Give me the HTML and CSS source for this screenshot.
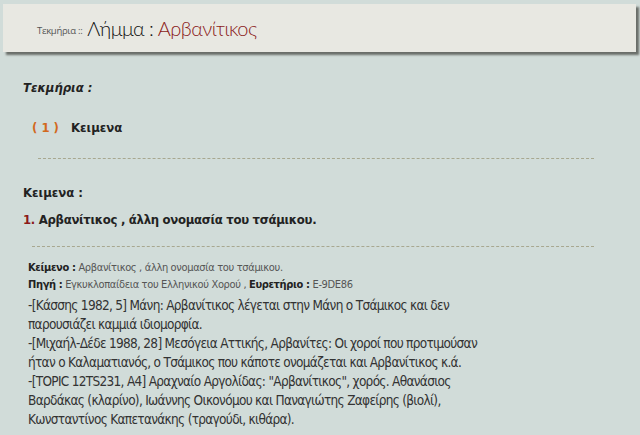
FILE: index.html
```html
<!DOCTYPE html>
<html lang="el">
    <head>
        <meta charset="UTF-8" />
        <title>Λήμμα : Αρβανίτικος</title>
        <link rel="stylesheet" href="styles.css">
    </head>
    <body>
        <div class="header">
            <span class="crumb">Τεκμήρια ::</span>
            <span class="title">Λήμμα : <span class="lemma">Αρβανίτικος</span></span>
        </div>
        <div class="content">
            <h3 class="section">Τεκμήρια :</h3>
            <div class="item"><span class="num">( 1 )</span> Κειμενα</div>
            <div class="sep"></div>
            <h4 class="sub">Κειμενα :</h4>
            <div class="entry"><span class="idx">1.</span> Αρβανίτικος , άλλη ονομασία του τσάμικου.</div>
            <div class="sep sep2"></div>
            <div class="meta">
                <div><b>Κείμενο :</b> Αρβανίτικος , άλλη ονομασία του τσάμικου.</div>
                <div><b>Πηγή :</b> Εγκυκλοπαίδεια του Ελληνικού Χορού , <b>Ευρετήριο :</b> E-9DE86</div>
            </div>
            <p class="text">-[Κάσσης 1982, 5] Μάνη: Αρβανίτικος λέγεται στην Μάνη ο Τσάμικος και δεν παρουσιάζει καμμιά ιδιομορφία.<br>-[Μιχαήλ-Δέδε 1988, 28] Μεσόγεια Αττικής, Αρβανίτες: Οι χοροί που προτιμούσαν ήταν ο Καλαματιανός, ο Τσάμικος που κάποτε ονομάζεται και Αρβανίτικος κ.ά.<br>-[TOPIC 12TS231, A4] Αραχναίο Αργολίδας: "Αρβανίτικος", χορός. Αθανάσιος Βαρδάκας (κλαρίνο), Ιωάννης Οικονόμου και Παναγιώτης Ζαφείρης (βιολί), Κωνσταντίνος Καπετανάκης (τραγούδι, κιθάρα).</p>
        </div>
    </body>
</html>
```

FILE: styles.css
```css
* {
    margin: 0;
    padding: 0;
}
body {
    background: #d1dcd9;
    font-family: "DejaVu Sans Condensed", "DejaVu Sans", sans-serif;
    color: #222;
}
.header {
    margin: 4px 4px 0 3px;
    height: 48px;
    background: #e8e8e2;
    box-shadow: 3px 3px 2px #6a6e69;
    display: flex;
    align-items: center;
    padding-left: 34px;
}
.crumb {
    font-family: "Open Sans", sans-serif;
    font-size: 9.5px;
    color: #555;
    letter-spacing: -0.3px;
    margin-right: 5px;
    margin-top: 5px;
}
.title {
    font-family: Lato, sans-serif;
    font-weight: 300;
    font-size: 20px;
    letter-spacing: -0.5px;
    color: #111;
}
.lemma {
    color: #8b1a1a;
}
.content {
    padding-left: 23px;
}
.section {
    font-size: 13px;
    font-style: italic;
    font-weight: bold;
    margin-top: 28px;
    height: 16px;
}
.item {
    font-size: 13px;
    font-weight: bold;
    margin-top: 24px;
    padding-left: 9px;
}
.num {
    color: #d2691e;
    margin-right: 8px;
}
.sep {
    border-top: 1px dashed #a8a890;
    margin: 23px 46px 0 15px;
}
.sub {
    font-size: 13px;
    margin-top: 26px;
}
.entry {
    font-size: 13px;
    font-weight: bold;
    letter-spacing: -0.3px;
    margin-top: 12px;
}
.idx {
    color: #8b1a1a;
}
.sep2 {
    margin: 19px 46px 0 9px;
}
.meta {
    font-size: 11px;
    color: #555;
    letter-spacing: -0.35px;
    line-height: 17px;
    margin-top: 12px;
    padding-left: 5px;
}
.meta b {
    color: #222;
}
.text {
    font-size: 13.5px;
    line-height: 19px;
    letter-spacing: -0.7px;
    color: #333;
    margin-top: 3px;
    padding-left: 5px;
    width: 470px;
}
```
